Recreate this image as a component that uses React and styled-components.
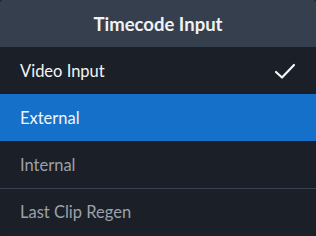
import React from 'react';
import styled, { createGlobalStyle } from 'styled-components';

const Global = createGlobalStyle`
  html, body {
    margin: 0;
    padding: 0;
    background: #1b1f27;
  }
  * { box-sizing: border-box; }
`;

const Panel = styled.div`
  width: 316px;
  height: 236px;
  display: flex;
  flex-direction: column;
  background: #1b1f27;
  border-radius: 3px;
  overflow: hidden;
  font-family: Lato, 'Liberation Sans', sans-serif;
`;

const Header = styled.div`
  height: 47px;
  display: flex;
  align-items: center;
  justify-content: center;
  background: #363f4e;
  color: #f1f2f4;
  font-size: 18.5px;
  font-weight: 700;
`;

const Row = styled.div`
  height: 47px;
  display: flex;
  align-items: center;
  justify-content: space-between;
  padding: 0 20px;
  font-size: 16.5px;
  background: ${(p) => (p.active ? '#1570c9' : 'transparent')};
  color: ${(p) => (p.dim ? '#9ca1a9' : '#f3f4f6')};
  border-top: ${(p) => (p.divider ? '1px solid #3a4150' : 'none')};
`;

const Check = () => (
  <svg width="22" height="18" viewBox="0 0 22 18" fill="none">
    <path d="M2 10 L8 15.5 L20 3" stroke="#f5f5f5" strokeWidth="2.2" strokeLinecap="round" strokeLinejoin="round" />
  </svg>
);

const items = [
  { label: 'Video Input', checked: true },
  { label: 'External', active: true },
  { label: 'Internal', dim: true },
  { label: 'Last Clip Regen', dim: true, divider: true },
];

const App = () => (
  <>
    <Global />
    <Panel>
      <Header>Timecode Input</Header>
      {items.map((it) => (
        <Row key={it.label} active={it.active} dim={it.dim} divider={it.divider}>
          <span>{it.label}</span>
          {it.checked && <Check />}
        </Row>
      ))}
    </Panel>
  </>
);

export default App;
